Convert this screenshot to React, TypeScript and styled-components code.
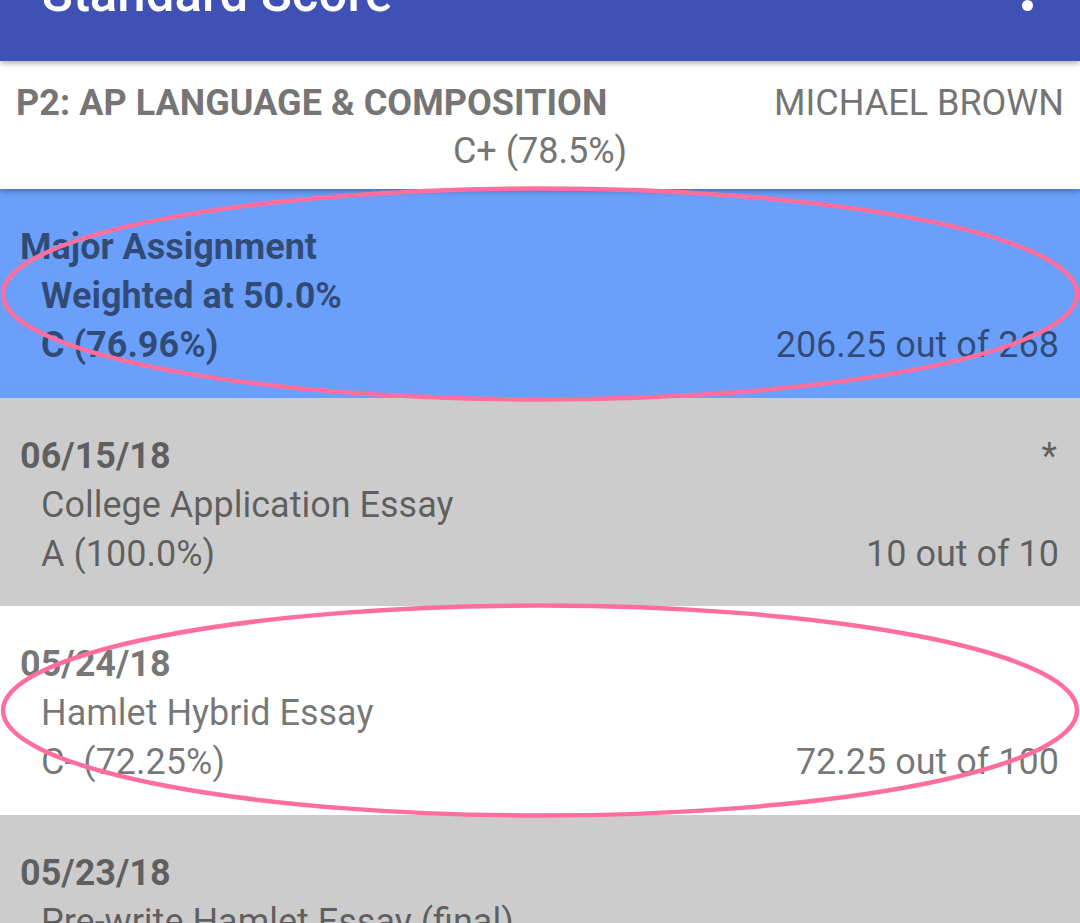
import React from "react";
import styled, { createGlobalStyle } from "styled-components";

const GlobalStyle = createGlobalStyle`
  html, body {
    margin: 0;
    padding: 0;
    background: #cccccc;
    overflow: hidden;
  }
  body {
    font-family: Roboto, "Noto Sans", "Liberation Sans", sans-serif;
  }
`;

const Screen = styled.div`
  position: relative;
  width: 1080px;
  height: 923px;
  overflow: hidden;
  display: flex;
  flex-direction: column;
  background: #cccccc;
`;

const AppBar = styled.header`
  position: relative;
  z-index: 3;
  flex: 0 0 61px;
  display: flex;
  justify-content: space-between;
  align-items: flex-start;
  padding: 0 47px 0 42px;
  background: #3f51b5;
  box-shadow: 0 2px 6px rgba(0, 0, 0, 0.35);
  overflow: hidden;
`;

const Title = styled.h1`
  margin: -32px 0 0 0;
  font-size: 51px;
  line-height: 51px;
  font-weight: 500;
  color: #ffffff;
  white-space: nowrap;
`;

const MenuDot = styled.span`
  display: block;
  width: 11px;
  height: 11px;
  margin-top: -0.5px;
  border-radius: 50%;
  background: #ffffff;
`;

const ClassCard = styled.section`
  position: relative;
  z-index: 2;
  display: flex;
  flex-direction: column;
  padding: 18px 16px 14px 16px;
  background: #ffffff;
  color: #757575;
  box-shadow: 0 2px 6px rgba(0, 0, 0, 0.35);
  font-size: 36px;
  line-height: 48px;
`;

const ClassLine = styled.div`
  display: flex;
  justify-content: space-between;
  white-space: nowrap;
`;

const ClassName = styled.span`
  font-weight: 700;
  letter-spacing: 0.05px;
`;

const Teacher = styled.span`
  font-weight: 400;
`;

const ClassGrade = styled.div`
  text-align: center;
`;

const Row = styled.div<{ $bg: string }>`
  display: flex;
  flex-direction: column;
  flex: 0 0 auto;
  padding: 34px 21px 27.5px 20px;
  background: ${(p) => p.$bg};
  color: rgba(0, 0, 0, 0.54);
  font-size: 36px;
  line-height: 49px;
  white-space: nowrap;
`;

const Line = styled.div<{ $indent?: boolean; $bold?: boolean }>`
  display: flex;
  justify-content: space-between;
  padding-left: ${(p) => (p.$indent ? "21px" : "0")};
  font-weight: ${(p) => (p.$bold ? 700 : 400)};
`;

const Side = styled.span`
  font-weight: 400;
`;

const Star = styled.span`
  font-weight: 400;
  padding-right: 2px;
`;

const Overlay = styled.svg`
  position: absolute;
  left: 0;
  top: 0;
  z-index: 10;
  pointer-events: none;
`;

type Item = {
  bg: string;
  head: string;
  star?: boolean;
  name: string;
  nameBold?: boolean;
  grade: string;
  gradeBold?: boolean;
  score?: string;
};

const items: Item[] = [
  {
    bg: "#6aa0fc",
    head: "Major Assignment",
    name: "Weighted at 50.0%",
    nameBold: true,
    grade: "C (76.96%)",
    gradeBold: true,
    score: "206.25 out of 268",
  },
  {
    bg: "#cccccc",
    head: "06/15/18",
    star: true,
    name: "College Application Essay",
    grade: "A (100.0%)",
    score: "10 out of 10",
  },
  {
    bg: "#ffffff",
    head: "05/24/18",
    name: "Hamlet Hybrid Essay",
    grade: "C- (72.25%)",
    score: "72.25 out of 100",
  },
  {
    bg: "#cccccc",
    head: "05/23/18",
    name: "Pre-write Hamlet Essay (final)",
    grade: "A (100.0%)",
    score: "10 out of 10",
  },
];

export default function App() {
  return (
    <>
      <GlobalStyle />
      <Screen>
        <AppBar>
          <Title>Standard Score</Title>
          <MenuDot />
        </AppBar>
        <ClassCard>
          <ClassLine>
            <ClassName>P2: AP LANGUAGE &amp; COMPOSITION</ClassName>
            <Teacher>MICHAEL BROWN</Teacher>
          </ClassLine>
          <ClassGrade>C+ (78.5%)</ClassGrade>
        </ClassCard>
        {items.map((it) => (
          <Row key={it.head} $bg={it.bg}>
            <Line $bold>
              <span>{it.head}</span>
              {it.star && <Star>*</Star>}
            </Line>
            <Line $indent $bold={it.nameBold}>
              <span>{it.name}</span>
            </Line>
            <Line $indent $bold={it.gradeBold}>
              <span>{it.grade}</span>
              {it.score && <Side>{it.score}</Side>}
            </Line>
          </Row>
        ))}
        <Overlay width="1080" height="923" viewBox="0 0 1080 923">
          <ellipse cx="540" cy="294" rx="537" ry="105.5" fill="none" stroke="#ff6e9c" strokeWidth="4.5" />
          <ellipse cx="540" cy="710.5" rx="537" ry="105" fill="none" stroke="#ff6e9c" strokeWidth="4.5" />
        </Overlay>
      </Screen>
    </>
  );
}
